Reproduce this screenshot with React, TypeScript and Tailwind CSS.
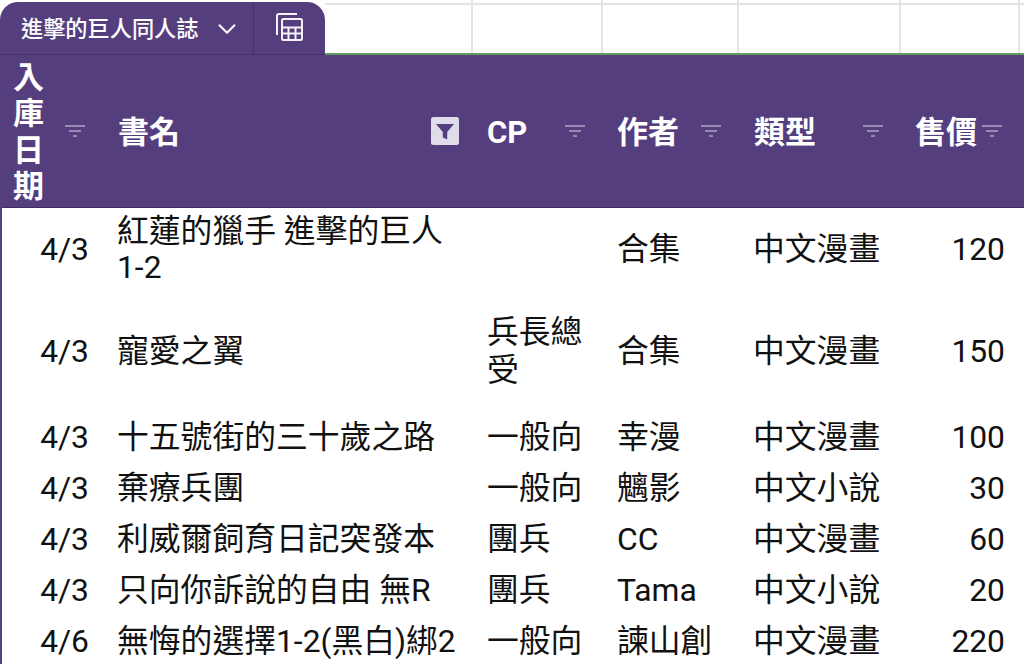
import React from "react";
import { ChevronDown } from "lucide-react";

const FONT = "font-['Roboto','Noto_Sans_CJK_TC',sans-serif]";

const rows: { d: string; t: string; c: string; a: string; k: string; p: string; h: string; lh: string }[] = [
  { d: "4/3", t: "紅蓮的獵手 進擊的巨人 1-2", c: "", a: "合集", k: "中文漫畫", p: "120", h: "h-[82px]", lh: "leading-[36px]" },
  { d: "4/3", t: "寵愛之翼", c: "兵長總受", a: "合集", k: "中文漫畫", p: "150", h: "h-[122px]", lh: "leading-[38px]" },
  { d: "4/3", t: "十五號街的三十歲之路", c: "一般向", a: "幸漫", k: "中文漫畫", p: "100", h: "h-[51px] pb-[2px]", lh: "leading-[38px]" },
  { d: "4/3", t: "棄療兵團", c: "一般向", a: "魑影", k: "中文小說", p: "30", h: "h-[51px] pb-[2px]", lh: "leading-[38px]" },
  { d: "4/3", t: "利威爾飼育日記突發本", c: "團兵", a: "CC", k: "中文漫畫", p: "60", h: "h-[51px] pb-[2px]", lh: "leading-[38px]" },
  { d: "4/3", t: "只向你訴說的自由 無R", c: "團兵", a: "Tama", k: "中文小說", p: "20", h: "h-[51px] pb-[2px]", lh: "leading-[38px]" },
  { d: "4/6", t: "無悔的選擇1-2(黑白)綁2", c: "一般向", a: "諫山創", k: "中文漫畫", p: "220", h: "h-[51px] pb-[2px]", lh: "leading-[38px]" },
];

function SortIcon() {
  return (
    <svg width="20" height="12" viewBox="0 0 20 12" className="shrink-0" stroke="#dcd6e8" strokeWidth="1.2">
      <path d="M0 1h20M4 6h12M8 11h4" fill="none" />
    </svg>
  );
}

function FilterBox() {
  return (
    <svg width="28" height="28" viewBox="0 0 28 28" className="shrink-0">
      <rect width="28" height="28" rx="2.5" fill="#e0dcea" />
      <path d="M5 7h18l-6.8 8v7.5l-4.4-2V15z" fill="#553e7e" />
    </svg>
  );
}

function CalcIcon() {
  return (
    <svg width="29" height="30" viewBox="0 0 29 30" fill="none" stroke="#f4f2f8" strokeWidth="2">
      <path d="M2 23V4a2 2 0 0 1 2-2h18" />
      <rect x="7" y="7" width="20" height="21" rx="1.500" />
      <path d="M7 15.500h20M7 21.500h20M13.500 15.500V28M20.500 15.500V28" />
    </svg>
  );
}

function GridCells({ h }: { h: string }) {
  const widths = ["w-[148px]", "w-[130px]", "w-[136px]", "w-[162px]", "w-[119px]"];
  return (
    <div className={`flex ${h}`}>
      {widths.map((w) => (
        <div key={w} className={`${w} shrink-0 border-r-2 border-[#e4e4e4]`} />
      ))}
    </div>
  );
}

const COLS = "grid grid-cols-[101px_370px_130px_137px_160px_1fr]";

export default function App() {
  return (
    <div className={`${FONT} w-[1024px] h-[664px] overflow-hidden bg-white text-[#111]`}>
      <div className="flex h-[55px]">
        <div className="w-[325px] shrink-0 mt-[2px] flex rounded-t-[18px] bg-[#553e7e] border-b border-[#43306a] text-white">
          <div className="w-[254px] flex items-center pl-[21px] pt-[2px] border-r border-[#43306a]">
            <span className="text-[22.200px] font-medium leading-none">進擊的巨人同人誌</span>
            <ChevronDown className="ml-[13px] w-[30px] h-[30px]" strokeWidth={1.6} />
          </div>
          <div className="flex-1 flex items-center pl-[21px] pb-[3px]">
            <CalcIcon />
          </div>
        </div>
        <div className="flex-1 flex flex-col border-b-2 border-[#5f9a5f]">
          <GridCells h="h-[3px]" />
          <div className="h-[2px] bg-[#e4e4e4]" />
          <GridCells h="flex-1" />
        </div>
      </div>
      <div className="border-l-2 border-[#553e7e]">
        <div className={`${COLS} h-[153px] bg-[#553e7e] border-b border-[#3f2c66] text-white font-bold text-[31px] leading-[36.500px] items-center`}>
          <div className="flex items-center justify-between pl-[11px] pr-[18px]">
            <span className="w-[31px] pt-[3px]">入庫日期</span>
            <SortIcon />
          </div>
          <div className="flex items-center justify-between pl-[15px] pr-[14px]">
            <span className="pt-[4px]">書名</span>
            <FilterBox />
          </div>
          <div className="flex items-center justify-between pl-[14px] pr-[18px]">
            <span className="pt-[4px]">CP</span>
            <SortIcon />
          </div>
          <div className="flex items-center justify-between pl-[14px] pr-[19px]">
            <span className="pt-[4px]">作者</span>
            <SortIcon />
          </div>
          <div className="flex items-center justify-between pl-[14px] pr-[17px]">
            <span className="pt-[4px]">類型</span>
            <SortIcon />
          </div>
          <div className="flex items-center justify-end pr-[22px] gap-[5px]">
            <span className="pt-[4px]">售價</span>
            <SortIcon />
          </div>
        </div>
        {rows.map((r, i) => (
          <div key={i} className={`${COLS} ${r.h} ${r.lh} text-[31.800px] items-center`}>
            <div className="text-right pr-[14px]">{r.d}</div>
            <div className="pl-[14px] pr-[14px]">{r.t}</div>
            <div className="pl-[14px] pr-[10px]">{r.c}</div>
            <div className="pl-[14px]">{r.a}</div>
            <div className="pl-[13px]">{r.k}</div>
            <div className="text-right pr-[19px]">{r.p}</div>
          </div>
        ))}
      </div>
    </div>
  );
}
